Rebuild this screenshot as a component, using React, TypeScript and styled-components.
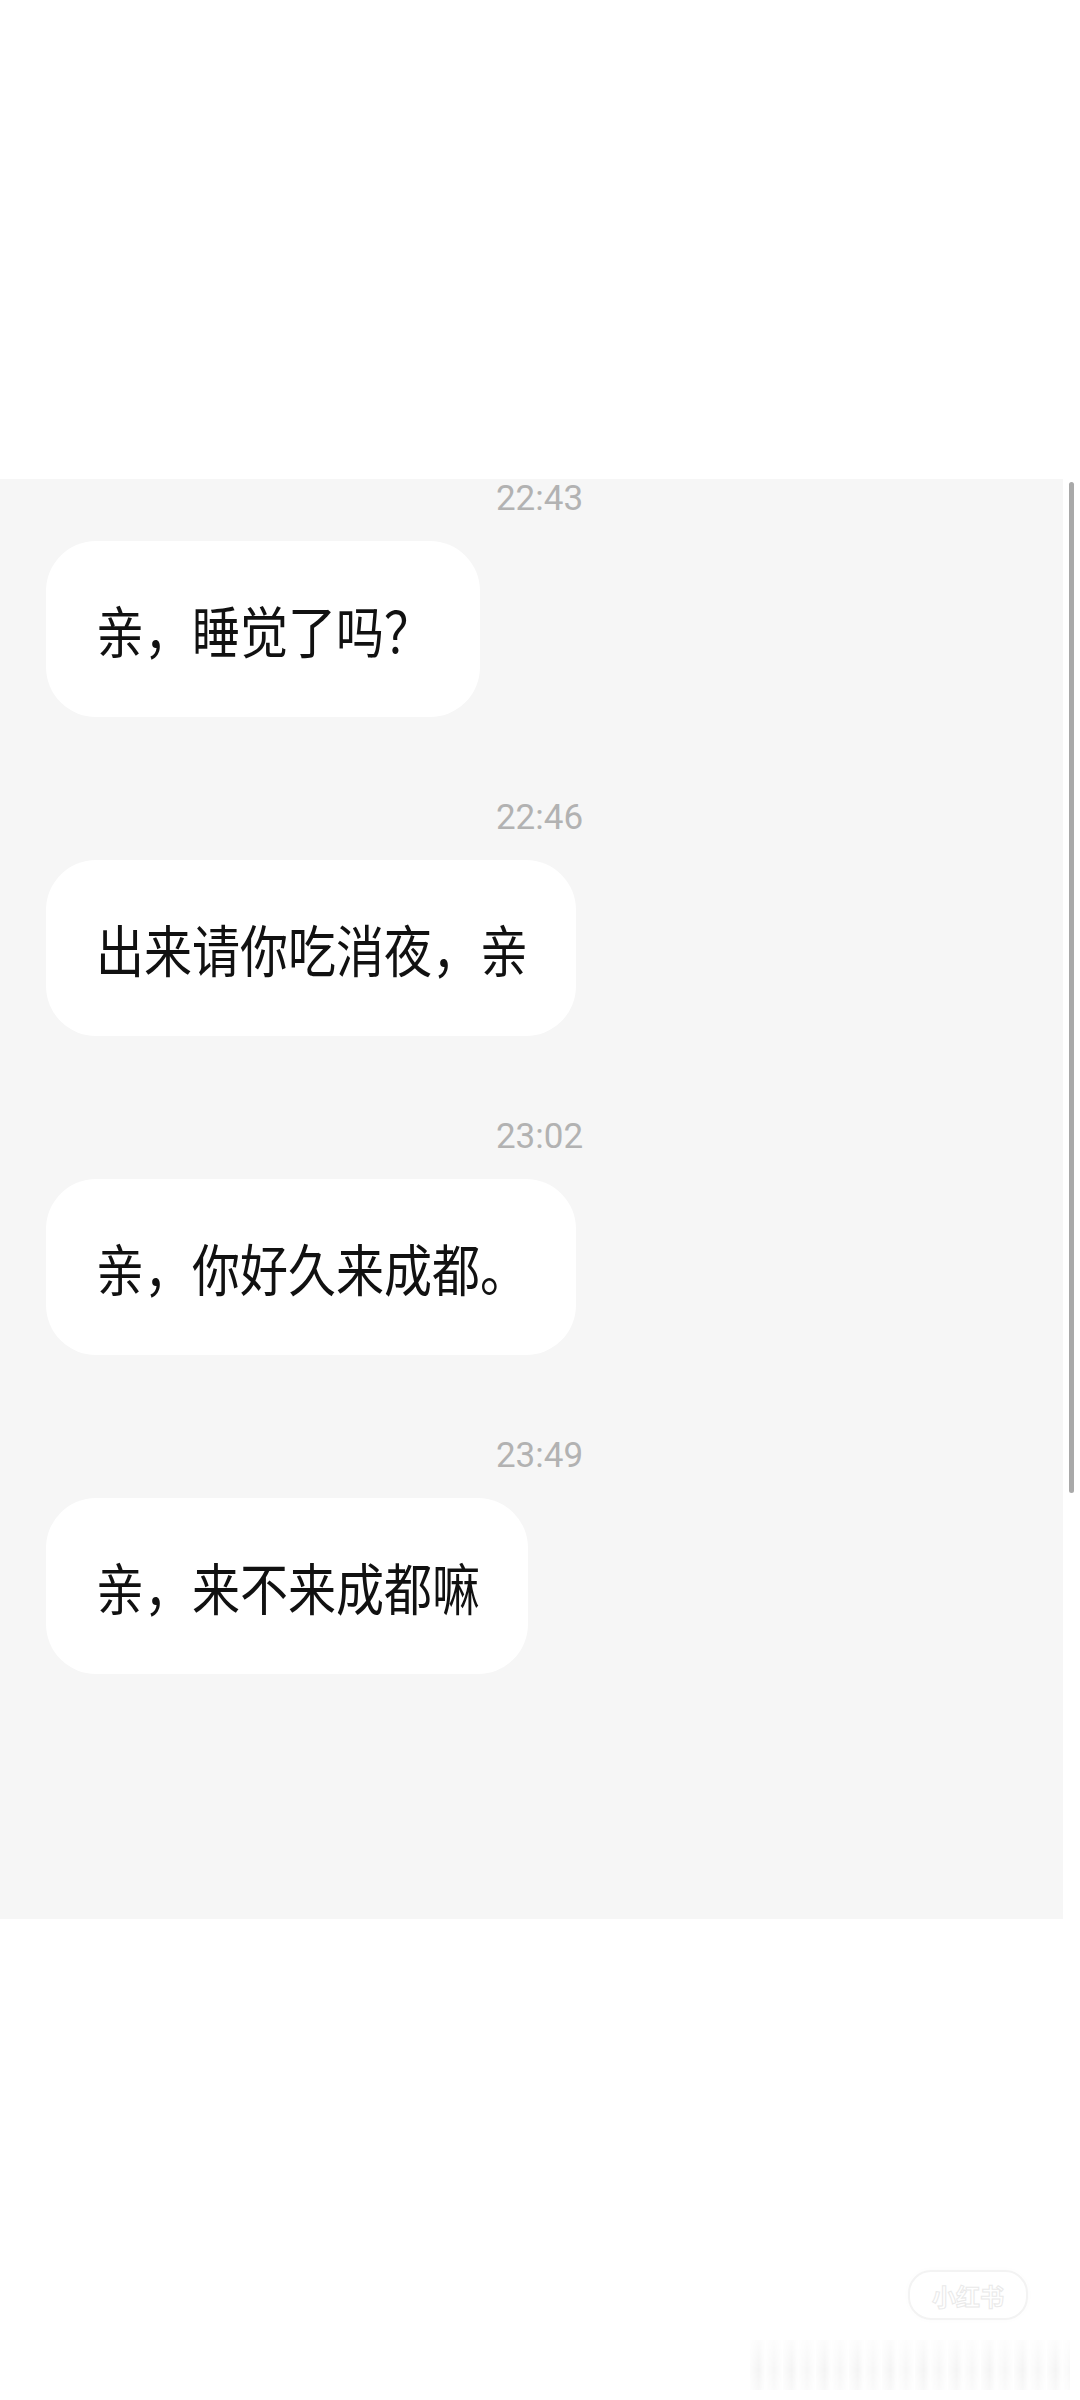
import React from 'react';
import styled, { createGlobalStyle } from 'styled-components';

const GlobalStyle = createGlobalStyle`
  html, body {
    margin: 0;
    padding: 0;
    background: #ffffff;
  }
  body {
    width: 1080px;
    min-height: 2400px;
    font-family: 'Noto Sans CJK SC', 'Noto Sans', sans-serif;
  }
`;

const Page = styled.div`
  position: relative;
  width: 1080px;
  height: 2400px;
  background: #ffffff;
  overflow: hidden;
`;

const TopSpace = styled.div`
  height: 479px;
`;

const ChatRow = styled.div`
  display: flex;
  height: 1440px;
`;

const ChatPanel = styled.div`
  width: 1063px;
  background: #f6f6f6;
  display: flex;
  flex-direction: column;
`;

const ScrollTrack = styled.div`
  flex: 1;
  display: flex;
  justify-content: center;
  padding-top: 3px;
`;

const ScrollThumb = styled.div`
  width: 5px;
  height: 1011px;
  border-radius: 3px;
  background: #a9a9a9;
`;

const MessageGroup = styled.div<{ $first?: boolean }>`
  display: flex;
  flex-direction: column;
  margin-top: ${p => (p.$first ? '0' : '81px')};
`;

const Stamp = styled.div`
  height: 40px;
  line-height: 40px;
  text-align: center;
  font-family: Roboto, 'Liberation Sans', sans-serif;
  font-size: 35px;
  font-weight: 400;
  color: #b2b2b2;
  padding-left: 16px;
`;

const Bubble = styled.div`
  align-self: flex-start;
  margin: 22px 0 0 46px;
  height: 176px;
  padding: 0 48px 0 50px;
  box-sizing: border-box;
  display: flex;
  align-items: center;
  background: #ffffff;
  border-radius: 50px;
`;

const BubbleText = styled.span`
  display: inline-block;
  font-family: 'Noto Sans CJK SC', 'Noto Sans', sans-serif;
  font-size: 48px;
  line-height: 48px;
  color: #111111;
  white-space: nowrap;
  transform: scaleY(1.15);
`;

const Footer = styled.div`
  display: flex;
  flex-direction: column;
  align-items: flex-end;
  padding: 351px 52px 0 0;
`;

const Badge = styled.div`
  width: 116px;
  height: 46px;
  border-radius: 23px;
  border: 2px solid #f3f3f3;
  box-shadow: 0 0 6px rgba(0, 0, 0, 0.02);
  display: flex;
  align-items: center;
  justify-content: center;
  font-family: 'Noto Sans CJK SC', sans-serif;
  font-size: 24px;
  font-weight: 700;
  color: #ffffff;
  -webkit-text-stroke: 1px #e9e9e9;
`;

const Smudge = styled.div`
  margin: 20px -42px 0 0;
  width: 320px;
  height: 50px;
  background: repeating-linear-gradient(
    90deg,
    rgba(0, 0, 0, 0.01) 0px,
    rgba(0, 0, 0, 0.045) 9px,
    rgba(0, 0, 0, 0.005) 15px,
    rgba(0, 0, 0, 0.03) 24px,
    rgba(0, 0, 0, 0) 33px
  );
  -webkit-mask-image: linear-gradient(180deg, rgba(0, 0, 0, 0.3), #000 60%, rgba(0, 0, 0, 0.6));
`;

const messages = [
  { time: '22:43', text: '亲，睡觉了吗？' },
  { time: '22:46', text: '出来请你吃消夜，亲' },
  { time: '23:02', text: '亲，你好久来成都。' },
  { time: '23:49', text: '亲，来不来成都嘛' },
];

const App = () => {
  return (
    <Page>
      <GlobalStyle />
      <TopSpace />
      <ChatRow>
        <ChatPanel>
          {messages.map((m, index) => (
            <MessageGroup key={index} $first={index === 0}>
              <Stamp>{m.time}</Stamp>
              <Bubble>
                <BubbleText>{m.text}</BubbleText>
              </Bubble>
            </MessageGroup>
          ))}
        </ChatPanel>
        <ScrollTrack>
          <ScrollThumb />
        </ScrollTrack>
      </ChatRow>
      <Footer>
        <Badge>小红书</Badge>
        <Smudge />
      </Footer>
    </Page>
  );
};

export default App;
